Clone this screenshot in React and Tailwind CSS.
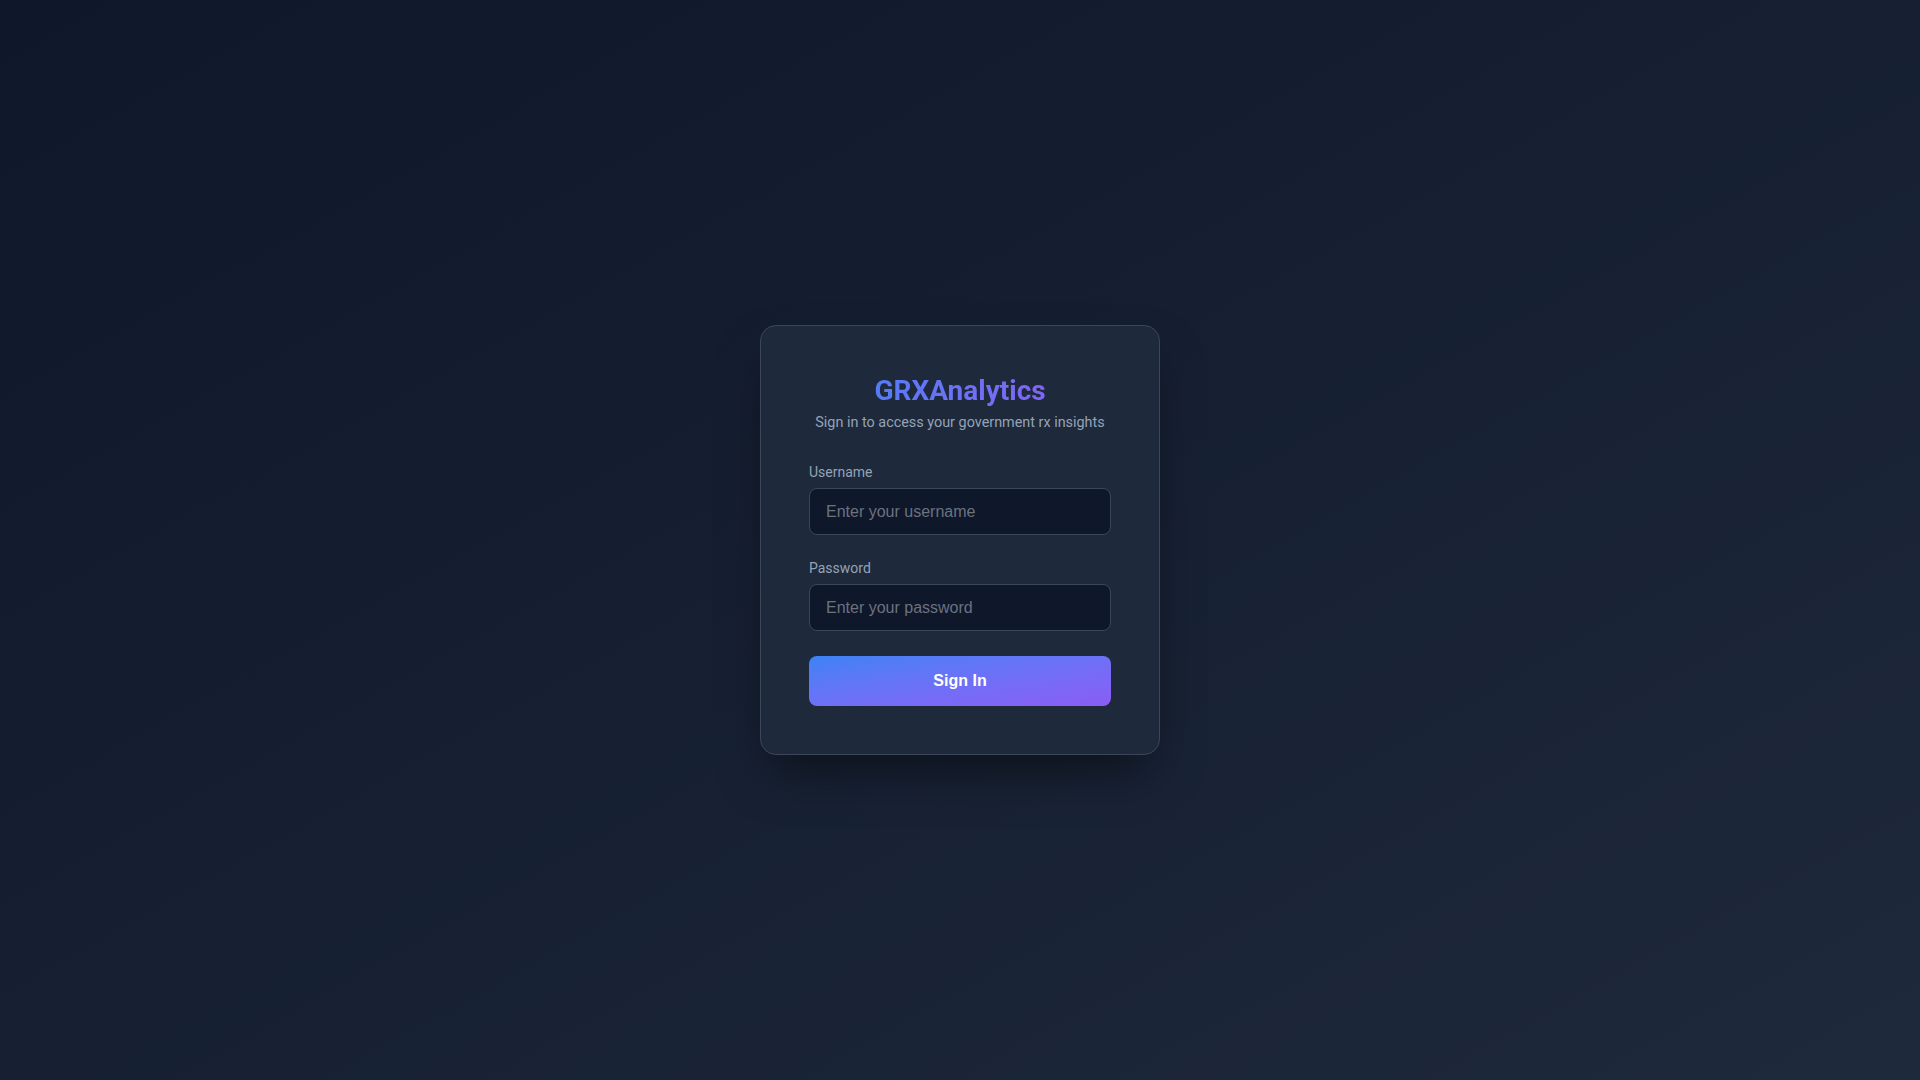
import React from 'react';

const App = () => {
  return (
    <div className="min-h-screen w-full flex items-center justify-center bg-gradient-to-br from-[#0f172a] to-[#1e293b] font-['Roboto',sans-serif]">

      {/* login card */}
      <div className="w-[400px] rounded-2xl border border-[#3b4657] bg-[#1e293b] p-12 shadow-[0_25px_50px_-12px_rgba(0,0,0,0.5)]">

        <h1 className="text-center text-[28px] leading-[34px] font-bold bg-gradient-to-r from-[#3b82f6] to-[#8b5cf6] bg-clip-text text-transparent">
          GRXAnalytics
        </h1>
        <p className="mt-[5px] text-center text-[14.4px] leading-5 text-[#94a3b8]">
          Sign in to access your government rx insights
        </p>

        <form className="mt-[29px]" onSubmit={(e) => e.preventDefault()}>
          <label className="block mb-1.5 text-sm leading-5 text-[#94a3b8]">Username</label>
          <input
            type="text"
            placeholder="Enter your username"
            className="block w-full h-[47px] px-4 rounded-lg border border-[#3b4657] bg-[#0f172a] text-base text-white font-['Liberation_Sans',Arial,sans-serif] placeholder:text-[#6b7280] outline-none"
          />

          <label className="block mt-[23px] mb-1.5 text-sm leading-5 text-[#94a3b8]">Password</label>
          <input
            type="password"
            placeholder="Enter your password"
            className="block w-full h-[47px] px-4 rounded-lg border border-[#3b4657] bg-[#0f172a] text-base text-white font-['Liberation_Sans',Arial,sans-serif] placeholder:text-[#6b7280] outline-none"
          />

          <button
            type="submit"
            className="mt-[25px] block w-full h-[50px] rounded-lg bg-gradient-to-br from-[#3b82f6] to-[#8b5cf6] text-base font-bold text-white font-['Liberation_Sans',Arial,sans-serif]"
          >
            Sign In
          </button>
        </form>

      </div>
    </div>
  );
};

export default App;
